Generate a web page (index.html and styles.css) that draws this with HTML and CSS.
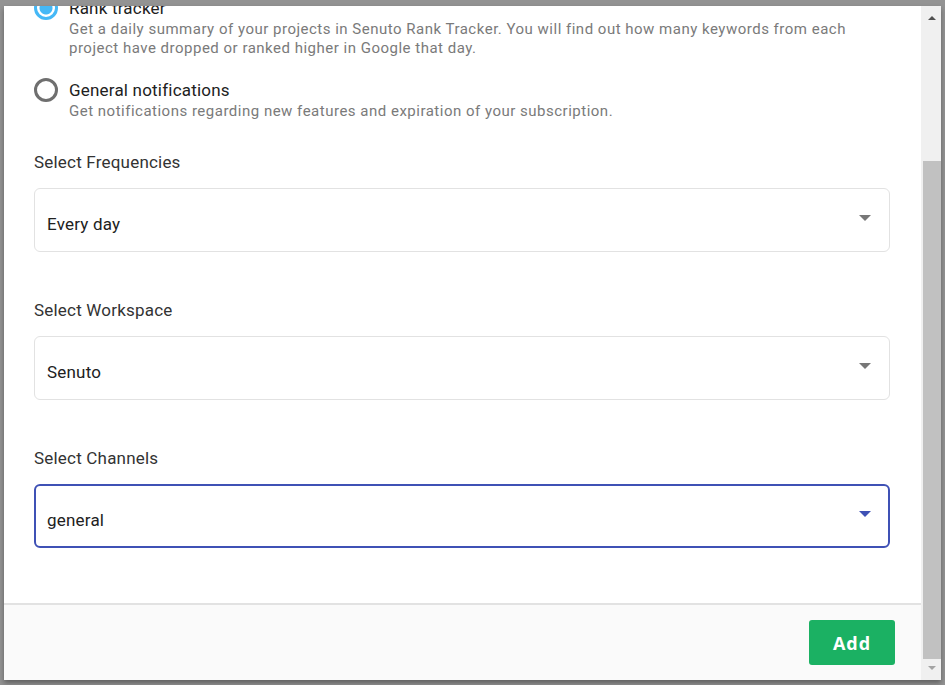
FILE: index.html
```html
<!DOCTYPE html>
<html>
<head>
    <meta charset="utf-8" />
    <title>Add notification</title>
    <link rel="stylesheet" href="styles.css">
</head>
<body>
<div class="modal">
    <div class="modal-main">
        <div class="modal-body">
            <div class="body-inner">
                <div class="radio-item">
                    <span class="radio checked"></span>
                    <div class="radio-text">
                        <div class="radio-title">Rank tracker</div>
                        <div class="radio-desc">Get a daily summary of your projects in Senuto Rank Tracker. You will find out how many keywords from each project have dropped or ranked higher in Google that day.</div>
                    </div>
                </div>
                <div class="radio-item">
                    <span class="radio"></span>
                    <div class="radio-text">
                        <div class="radio-title">General notifications</div>
                        <div class="radio-desc">Get notifications regarding new features and expiration of your subscription.</div>
                    </div>
                </div>

                <div class="field">
                    <div class="field-label">Select Frequencies</div>
                    <div class="select">
                        <span class="select-value">Every day</span>
                        <span class="caret"></span>
                    </div>
                </div>
                <div class="field">
                    <div class="field-label">Select Workspace</div>
                    <div class="select">
                        <span class="select-value">Senuto</span>
                        <span class="caret"></span>
                    </div>
                </div>
                <div class="field">
                    <div class="field-label">Select Channels</div>
                    <div class="select focused">
                        <span class="select-value">general</span>
                        <span class="caret"></span>
                    </div>
                </div>
            </div>
        </div>
        <div class="modal-footer">
            <button class="btn-add">Add</button>
        </div>
    </div>
    <div class="scrollbar">
        <div class="sb-btn sb-up"><span class="sb-arrow up"></span></div>
        <div class="sb-track"><div class="sb-thumb"></div></div>
        <div class="sb-btn sb-down"><span class="sb-arrow down"></span></div>
    </div>
</div>
</body>
</html>
```

FILE: styles.css
```css
*{margin: 0;padding: 0;box-sizing: border-box;}
html,body{height: 100%;}
body{
    background-color: #939393;
    padding: 6px 4px 5px 4px;
    font-family: Roboto, "Noto Sans", sans-serif;
    overflow: hidden;
}
.modal{
    display: flex;
    height: 674px;
    background-color: #fff;
    box-shadow: 0 3px 5px rgba(0,0,0,.35);
}
.modal-main{
    flex: 1;
    display: flex;
    flex-direction: column;
    min-width: 0;
}
.modal-body{
    flex: 1;
    overflow: hidden;
    padding: 0 31px 0 30px;
}
.body-inner{
    margin-top: -10px;
}
.radio-item{
    display: flex;
    gap: 11px;
    margin-bottom: 20px;
}
.radio{
    flex: none;
    width: 24px;
    height: 24px;
    border: 3px solid #6f6f6f;
    border-radius: 50%;
}
.radio.checked{
    border-color: #45b8f6;
    background: radial-gradient(circle, #45b8f6 0 6px, #fff 7px);
}
.radio-title{
    font-size: 17px;
    line-height: 24px;
    letter-spacing: 0.2px;
    color: #212121;
}
.radio-desc{
    font-size: 15px;
    line-height: 19px;
    letter-spacing: 0.5px;
    color: #7a7a7a;
    padding-right: 30px;
}
.field{
    margin-top: 29px;
}
.field + .field{
    margin-top: 46px;
}
.field-label{
    font-size: 17px;
    line-height: 24px;
    letter-spacing: 0.2px;
    color: #333;
    margin-bottom: 14px;
}
.select{
    display: flex;
    align-items: center;
    height: 64px;
    border: 1px solid #e2e2e2;
    border-radius: 6px;
    padding: 0 18px 0 12px;
}
.select.focused{
    border: 2px solid #3f51b5;
    padding: 0 17px 0 11px;
}
.select-value{
    flex: 1;
    font-size: 17px;
    line-height: 20px;
    letter-spacing: 0.2px;
    color: #212121;
    padding-top: 8px;
}
.caret{
    width: 0;
    height: 0;
    border-left: 6px solid transparent;
    border-right: 6px solid transparent;
    border-top: 6px solid #777;
    margin-bottom: 4px;
}
.select.focused .caret{
    border-top-color: #3f51b5;
}
.modal-footer{
    display: flex;
    justify-content: flex-end;
    border-top: 2px solid #e2e2e2;
    background-color: #fafafa;
    padding: 15px 26px 15px 0;
}
.btn-add{
    width: 86px;
    height: 45px;
    border: none;
    border-radius: 3px;
    background-color: #1bb163;
    color: #fff;
    font-family: "Open Sans", sans-serif;
    font-size: 18px;
    font-weight: 700;
    letter-spacing: 1px;
}
.scrollbar{
    flex: none;
    width: 20px;
    display: flex;
    flex-direction: column;
    background-color: #f0f0f0;
}
.sb-btn{
    display: flex;
    justify-content: center;
    padding-left: 2px;
}
.sb-up{
    height: 22px;
    align-items: center;
    padding-top: 1px;
}
.sb-track{
    padding: 133px 0 0 2px;
}
.sb-thumb{
    height: 498px;
    background-color: #c1c1c1;
}
.sb-down{
    flex: 1;
    padding-top: 7px;
}
.sb-arrow{
    width: 0;
    height: 0;
    border-left: 4px solid transparent;
    border-right: 4px solid transparent;
}
.sb-arrow.up{
    border-bottom: 4px solid #505050;
}
.sb-arrow.down{
    border-top: 4px solid #a3a3a3;
}
```
